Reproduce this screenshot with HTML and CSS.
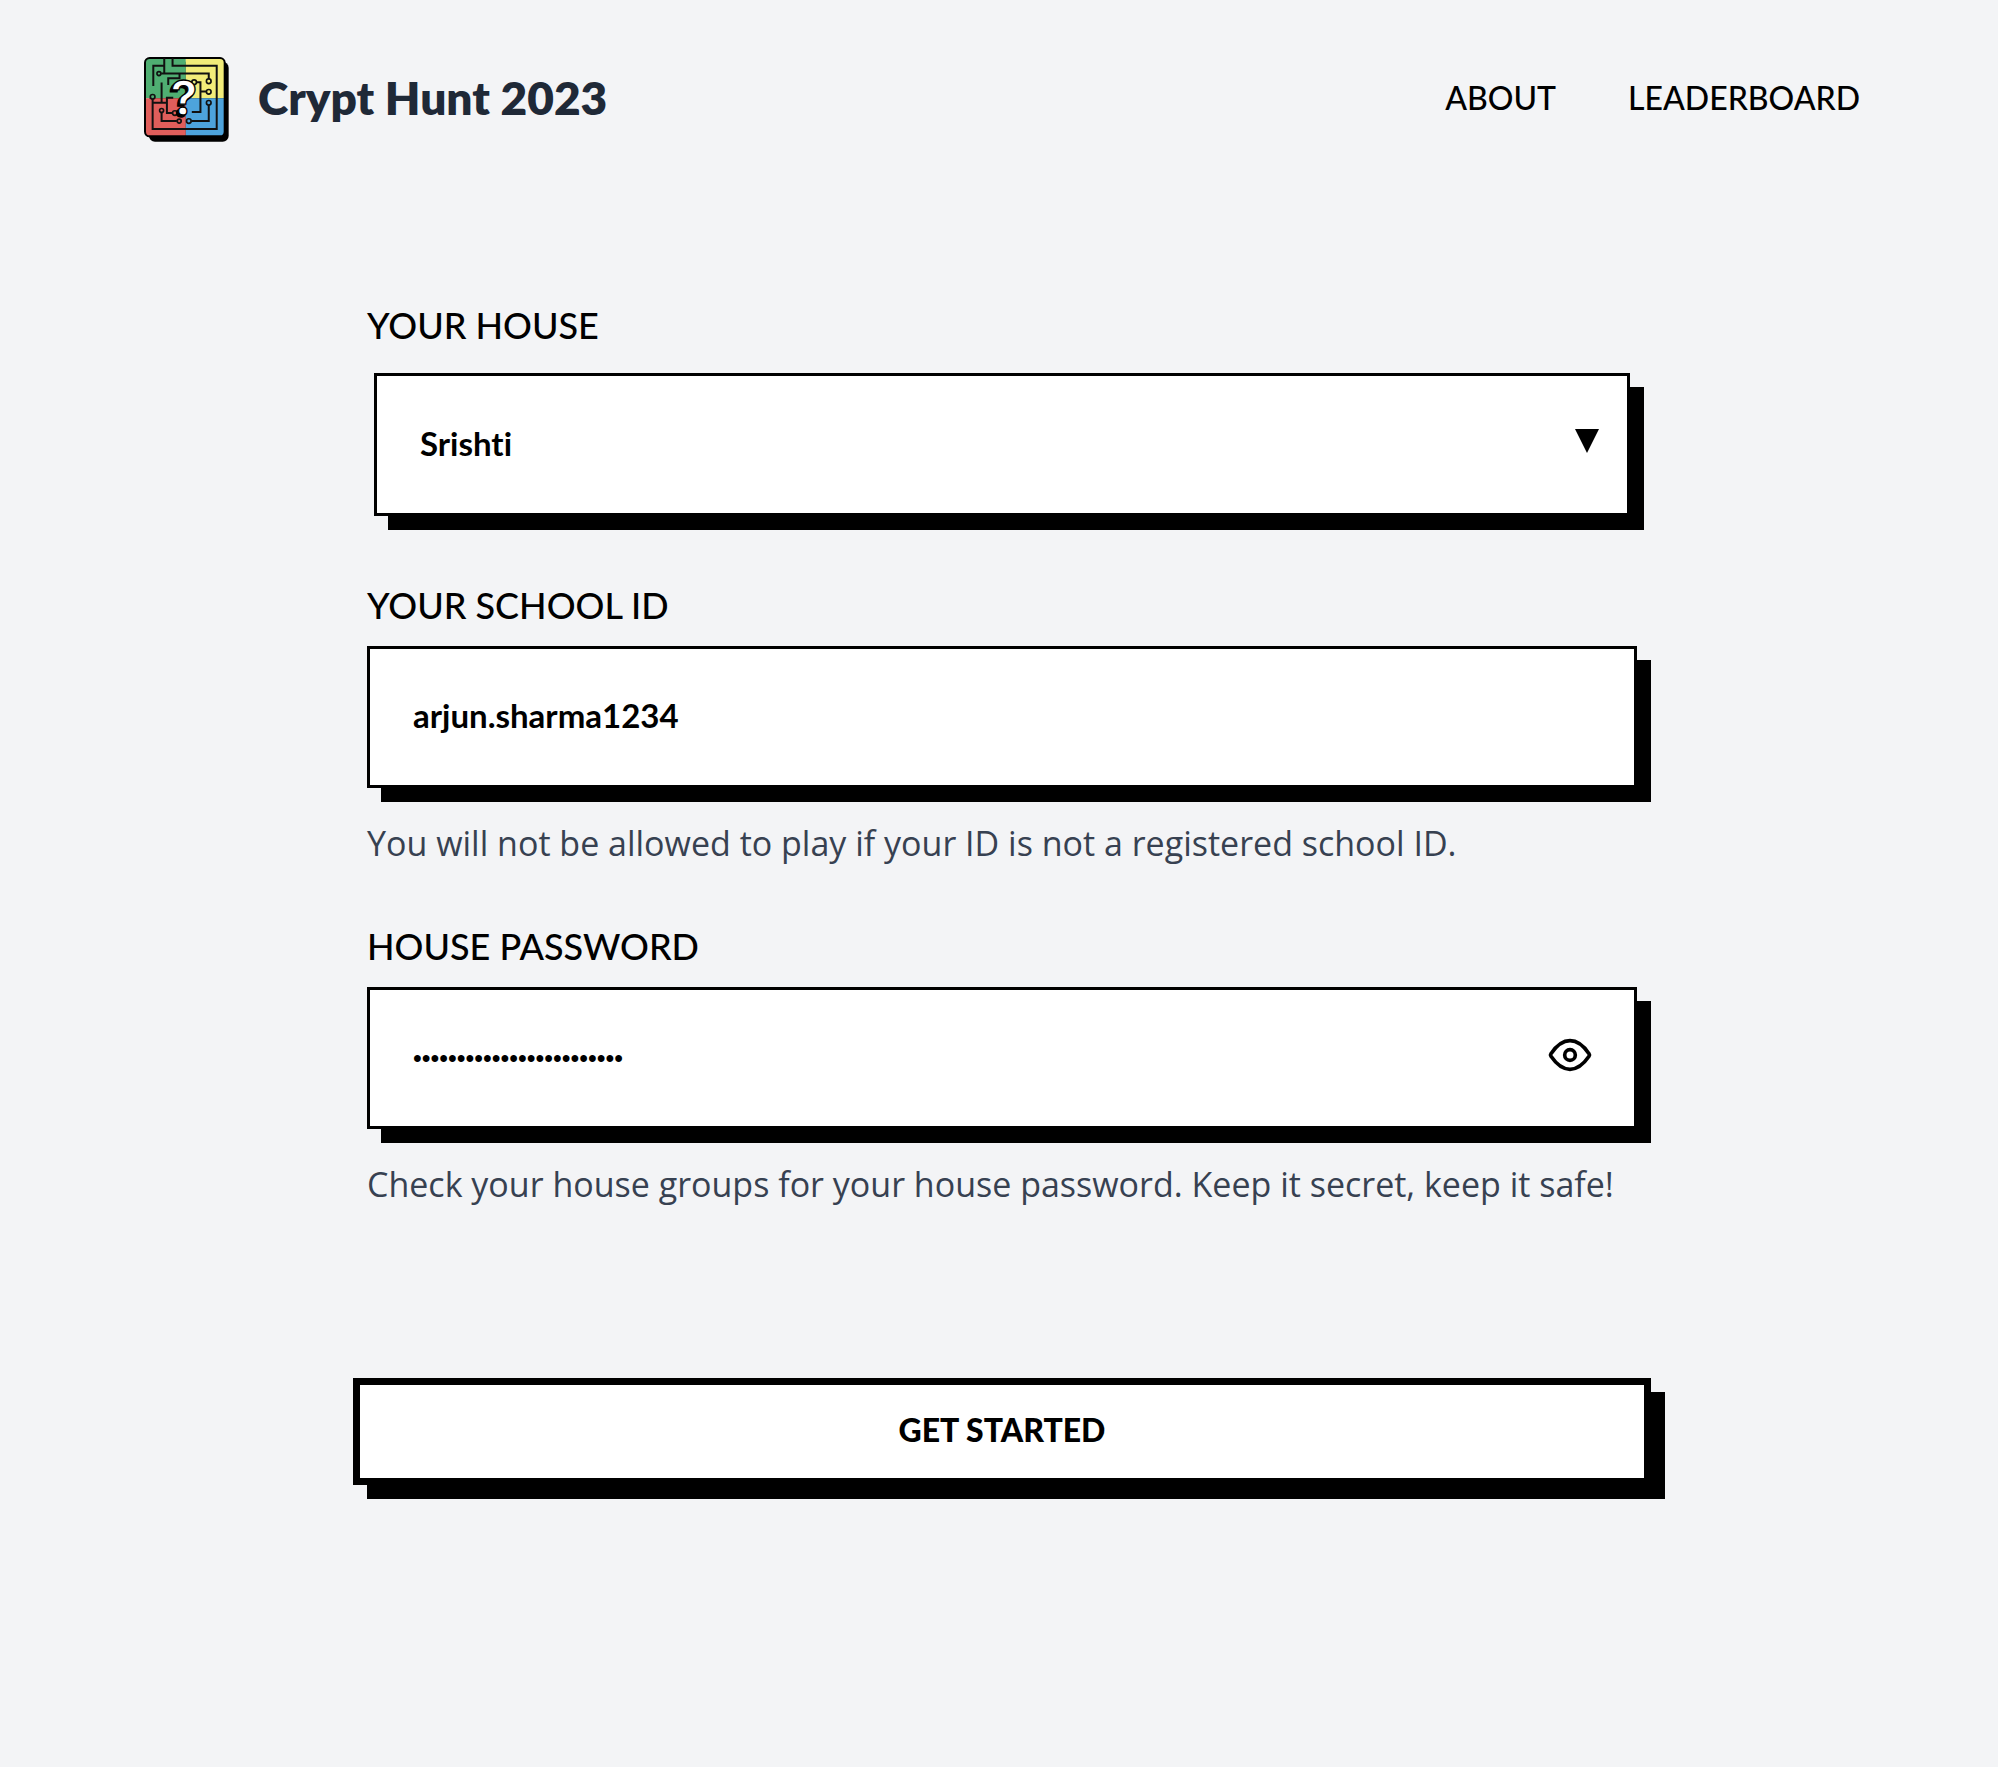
FILE: index.html
```html
<!DOCTYPE html>
<html lang="en">
<head>
<meta charset="utf-8">
<meta name="viewport" content="width=device-width, initial-scale=1">
<title>Crypt Hunt 2023</title>
<link rel="stylesheet" href="styles.css">
</head>
<body>
<header class="site-header">
  <a class="brand" href="#">
    <svg class="brand-logo" viewBox="43 50 256 256" aria-hidden="true">
      <rect x="58" y="64" width="240" height="241" rx="18" fill="#000"/>
      <clipPath id="tile"><rect x="46" y="53" width="240" height="236" rx="14"/></clipPath>
      <g clip-path="url(#tile)">
        <path fill="#4fae72" d="M43 50h126v124H43z"/>
        <path fill="#f2ec79" d="M169 50h120v124H169z"/>
        <path fill="#e05e5b" d="M43 174h126v118H43z"/>
        <path fill="#4da3dc" d="M169 174h120v118H169z"/>
      </g>
      <rect x="46" y="53" width="240" height="236" rx="14" fill="none" stroke="#000" stroke-width="6"/>
      <g fill="none" stroke="#111" stroke-width="6">
        <path d="M71 137V76h33M104 53v46M129 53v23h133v191H69v-90M95 100h143v16M116 134v-20h34v-13M96 127v61M69 188h42M131 173h-19v46h17M96 218v25h46M238 195v48h-52M201 126h12v90h-26M213 154h18"/>
        <g stroke-width="5">
          <circle cx="88" cy="100" r="6"/><circle cx="238" cy="123" r="7"/><circle cx="238" cy="155" r="7"/>
          <circle cx="238" cy="188" r="7"/><circle cx="194" cy="126" r="7"/><circle cx="69" cy="170" r="7"/>
          <circle cx="96" cy="211" r="6"/><circle cx="136" cy="219" r="7"/><circle cx="149" cy="243" r="6"/>
          <circle cx="178" cy="243" r="7"/>
        </g>
      </g>
      <text class="logo-mark logo-mark-shade" x="157" y="232">?</text>
      <text class="logo-mark" x="163" y="226">?</text>
    </svg>
    <span class="brand-name">Crypt Hunt 2023</span>
  </a>
  <nav class="site-nav">
    <a href="#about">ABOUT</a>
    <a href="#leaderboard">LEADERBOARD</a>
  </nav>
</header>
<main class="page">
  <form class="login">
    <div class="field">
      <label for="house">YOUR HOUSE</label>
      <div class="control control-select">
        <select id="house" class="box"><option>Srishti</option></select>
        <svg class="arrow" viewBox="0 0 24 24" aria-hidden="true"><path d="M0 0h24L12 24z"/></svg>
      </div>
    </div>
    <div class="field">
      <label for="school-id">YOUR SCHOOL ID</label>
      <input id="school-id" class="box" type="text" value="arjun.sharma1234">
      <p class="hint">You will not be allowed to play if your ID is not a registered school ID.</p>
    </div>
    <div class="field">
      <label for="password">HOUSE PASSWORD</label>
      <div class="control">
        <input id="password" class="box box-password" type="password" value="abcdefghijklmnopqrstuvwx">
        <button class="reveal" type="button" aria-label="Show password">
          <svg viewBox="-72 -72 144 144" aria-hidden="true">
            <path d="M-57 -4C-42 -26-24-43 0-43S42-26 57-4Q60 0 57 4C42 26 24 43 0 43S-42 26-57 4Q-60 0-57-4Z"/>
            <circle r="16"/>
          </svg>
        </button>
      </div>
      <p class="hint">Check your house groups for your house password. Keep it secret, keep it safe!</p>
    </div>
    <button class="submit" type="submit">GET STARTED</button>
  </form>
</main>
</body>
</html>
```
FILE: styles.css
```css
* { box-sizing: border-box; }

body {
  margin: 0;
  padding-left: 6px;
  min-height: 100vh;
  background: #f3f4f6;
  color: #000;
  font-family: Lato, "Open Sans", sans-serif;
  font-variant-ligatures: none;
}

.site-header {
  display: flex;
  align-items: center;
  justify-content: space-between;
  padding: 57px 138px 0;
}

.brand {
  display: flex;
  align-items: center;
  gap: 29px;
  color: #1f2937;
  text-decoration: none;
}

.brand-logo { width: 85px; height: 85px; }

.logo-mark {
  font-family: Inter, sans-serif;
  font-size: 144px;
  font-weight: 700;
  text-anchor: middle;
  fill: #fff;
  stroke: #000;
  stroke-width: 4px;
}

.logo-mark-shade { fill: #000; }

.brand-name { padding-bottom: 4px; font-size: 46px; line-height: 56px; font-weight: 800; }

.site-nav { display: flex; gap: 72px; padding-bottom: 4px; }

.site-nav a {
  color: #000;
  font-size: 32px;
  line-height: 56px;
  font-weight: 500;
  text-decoration: none;
}

.page { display: flex; justify-content: center; padding: 155px 32px 64px; }

.login {
  display: flex;
  flex-direction: column;
  gap: 47px;
  width: 100%;
  max-width: 1270px;
}

.field { display: flex; flex-direction: column; }

.field label {
  margin-bottom: 13px;
  font-size: 36px;
  line-height: 56px;
  font-weight: 500;
}

.control { display: grid; align-items: center; }
.control > * { grid-area: 1 / 1; }
.control-select { padding: 7px; margin-bottom: 7px; }

.box {
  appearance: none;
  width: 100%;
  height: 142px;
  margin: 0;
  padding: 0 43px 4px;
  border: 3px solid #000;
  border-radius: 0;
  outline: 0;
  background: #fff;
  box-shadow: 14px 14px 0 #000;
  color: #000;
  font-family: inherit;
  font-size: 33px;
  font-weight: 700;
  font-variant-ligatures: none;
}

.control-select .box { height: 143px; }

.box-password { padding-bottom: 0; font-family: "Liberation Sans", Arial, sans-serif; font-size: 25px; font-weight: 400; }

.arrow {
  justify-self: end;
  width: 24px;
  height: 24px;
  margin: 0 31px 8px 0;
  pointer-events: none;
}

.reveal {
  justify-self: end;
  width: 48px;
  height: 48px;
  margin: 0 43px 6px 0;
  padding: 0;
  border: 0;
  background: none;
}

.reveal svg {
  display: block;
  width: 48px;
  height: 48px;
  fill: none;
  stroke: #000;
  stroke-width: 11px;
}

.hint {
  margin: 27px 0 0;
  color: #374151;
  font-family: "Open Sans", sans-serif;
  font-size: 34px;
  line-height: 56px;
  font-weight: 500;
}

.submit {
  height: 107px;
  margin: 119px -14px 0;
  padding: 0 0 4px;
  border: 7px solid #000;
  background: #fff;
  box-shadow: 14px 14px 0 #000;
  color: #000;
  font-family: inherit;
  font-size: 32px;
  font-weight: 900;
}
```
